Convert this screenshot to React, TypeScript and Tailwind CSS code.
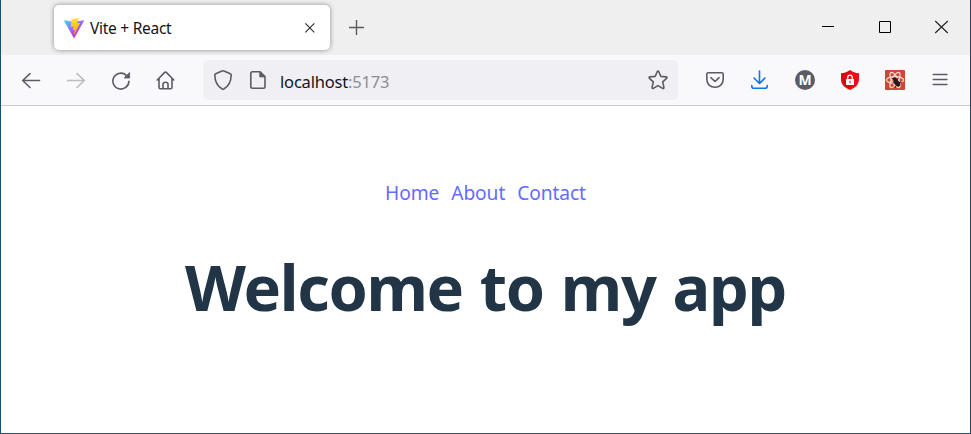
import type { ReactNode } from "react";

function IconButton({ label, children, color = "text-[#5b5b66]" }: { label: string; children: ReactNode; color?: string }) {
  return (
    <button aria-label={label} className={`flex h-10 w-[45px] shrink-0 items-center justify-center ${color}`}>
      <svg width="20" height="20" viewBox="0 0 20 20" fill="none" stroke="currentColor" strokeWidth="1.6" strokeLinecap="round" strokeLinejoin="round">
        {children}
      </svg>
    </button>
  );
}

function ViteLogo() {
  return (
    <svg width="20" height="20" viewBox="0 0 256 257" className="shrink-0">
      <defs>
        <linearGradient id="vite-body" x1="-.8%" x2="57.6%" y1="7.7%" y2="78.4%">
          <stop offset="0%" stopColor="#41D1FF" />
          <stop offset="100%" stopColor="#BD34FE" />
        </linearGradient>
        <linearGradient id="vite-bolt" x1="43.4%" x2="50.3%" y1="2.2%" y2="89%">
          <stop offset="0%" stopColor="#FFEA83" />
          <stop offset="8.3%" stopColor="#FFDD35" />
          <stop offset="100%" stopColor="#FFA800" />
        </linearGradient>
      </defs>
      <path fill="url(#vite-body)" d="M255.153 37.938L134.897 252.976c-2.483 4.44-8.862 4.466-11.382.048L.875 37.958c-2.746-4.814 1.371-10.646 6.827-9.67l120.385 21.517a6.537 6.537 0 0 0 2.322-.004l117.867-21.483c5.438-.991 9.574 4.796 6.877 9.62Z" />
      <path fill="url(#vite-bolt)" d="M185.432.063L96.44 17.501a3.268 3.268 0 0 0-2.634 3.014l-5.474 92.456a3.268 3.268 0 0 0 3.997 3.378l24.777-5.718c2.318-.535 4.413 1.507 3.936 3.838l-7.361 36.047c-.495 2.426 1.782 4.5 4.151 3.78l15.304-4.649c2.372-.72 4.652 1.36 4.15 3.788l-11.698 56.621c-.732 3.542 3.979 5.473 5.943 2.437l1.313-2.028l72.516-144.72c1.215-2.423-.88-5.186-3.54-4.672l-25.505 4.922c-2.396.462-4.435-1.77-3.759-4.114l16.646-57.705c.677-2.35-1.37-4.583-3.769-4.113Z" />
    </svg>
  );
}

function TabStrip() {
  return (
    <div className="flex h-[55px] items-start bg-[#efefef] pl-[53px]">
      <div className="mt-[5px] flex h-[45px] w-[276px] items-center rounded-[5px] bg-white pt-px pr-[14px] pl-[10px] shadow-[0_0_5px_rgba(0,0,0,0.42)]">
        <ViteLogo />
        <span className="ml-[6px] flex-1 pt-[2px] text-[15.5px] tracking-[-0.27px] whitespace-nowrap text-[#15141a]">Vite + React</span>
        <svg width="12" height="12" viewBox="0 0 12 12" fill="none" stroke="#333338" strokeWidth="1.2">
          <path d="M1.4 1.4 10.3 10.3M10.3 1.4 1.4 10.3" />
        </svg>
      </div>
      <svg width="16" height="16" viewBox="0 0 16 16" fill="none" stroke="#5b5b66" strokeWidth="1.4" className="mt-5 ml-[18px]">
        <path d="M1 7.5H16M8.5 0V15" />
      </svg>
      <div className="mt-5 ml-auto flex gap-[42px] pr-[21px]">
        <svg width="14" height="14" viewBox="0 0 14 14" stroke="#000"><path d="M0 6.5H12" /></svg>
        <svg width="14" height="14" viewBox="0 0 14 14" fill="none" stroke="#000"><path d="M1.5 1.5H12.5V12.5H1.5Z" /></svg>
        <svg width="15" height="14" viewBox="0 0 15 14" fill="none" stroke="#222" strokeWidth="1.1"><path d="M1.2 1 13.8 13M13.8 1 1.2 13" /></svg>
      </div>
    </div>
  );
}

function Toolbar() {
  return (
    <div className="flex h-[51px] items-start border-b border-[#cccccf] bg-[#f9f9fb] pt-[5px] pl-[7.5px]">
      <IconButton label="Back"><path d="M1.7 10.5H18.5M9 3.7 1.7 10.5 9 17.5" /></IconButton>
      <IconButton label="Forward" color="text-[#bcbcc1]"><path d="M1.5 10.5H18.3M11 3.7 18.3 10.5 11 17.5" /></IconButton>
      <IconButton label="Reload">
        <path d="M17.9 11.2A8 8 0 1 1 15.4 5.3" />
        <path d="M18.6 2.8V8H13.4Z" fill="currentColor" strokeWidth="0.8" />
      </IconButton>
      <IconButton label="Home">
        <path d="M1.2 10 8.7 2.4Q9.5 1.6 10.3 2.4L17.8 10M3 8.5V17.5Q3 18.8 4.3 18.8H14.7Q16 18.8 16 17.5V8.5M7 18.5V14Q7 12.2 9.5 12.2T12 14V18.5" />
      </IconButton>
      <div className="ml-[14.5px] flex h-10 w-[475px] items-center rounded-[5px] bg-[#f0f0f4] pr-[10px] pl-[10px] text-[#5b5b66]">
        <svg width="20" height="20" viewBox="0 0 20 20" fill="none" stroke="currentColor" strokeWidth="1.6" strokeLinejoin="round">
          <path d="M9 1.1Q10 .5 11 1.1L17.3 3.8Q18.3 4.2 18.2 5.2C18 12 15.6 16.2 10.8 19Q10 19.4 9.2 19C4.4 16.2 2 12 1.8 5.2Q1.7 4.2 2.7 3.8Z" />
        </svg>
        <svg width="18" height="20" viewBox="0 0 18 20" fill="none" stroke="currentColor" strokeWidth="1.6" strokeLinejoin="round" className="ml-4">
          <path d="M3.6 1.7H11L16 6.6V16.6Q16 18.3 14.3 18.3H3.6Q1.8 18.3 1.8 16.6V3.4Q1.8 1.7 3.6 1.7Z" />
          <path d="M10.7 1.5V7H16.2Z" fill="currentColor" strokeWidth="0.7" />
        </svg>
        <span className="ml-[13px] flex-1 pt-[5px] text-[16.5px] tracking-[-0.18px] whitespace-nowrap text-[#15141a]">
          localhost<span className="text-[#8d8d94]">:5173</span>
        </span>
        <svg width="20" height="20" viewBox="0 0 20 20" fill="none" stroke="currentColor" strokeWidth="1.6" strokeLinejoin="round">
          <path d="M9.2 1.7Q10 .4 10.8 1.7L12.8 6.4 18.1 6.9Q19.5 7.2 18.6 8.3L14.7 11.9 15.9 17.4Q16 18.9 14.7 18.4L10 15.6 5.3 18.4Q4 18.9 4.1 17.4L5.3 11.9 1.4 8.3Q.5 7.2 1.9 6.9L7.2 6.4Z" />
        </svg>
      </div>
      <div className="ml-[14.5px] flex">
        <IconButton label="Pocket">
          <path d="M3.3 2.8H16.7Q18.2 2.8 18.2 4.3V9.3C18.2 14.2 14.6 17.3 10 17.3S1.8 14.2 1.8 9.3V4.3Q1.8 2.8 3.3 2.8ZM5.9 7.7 10 11.5 14.1 7.7" />
        </IconButton>
        <IconButton label="Downloads" color="text-[#1373e6]">
          <path d="M9.5 1V13.3M4 8 9.5 13.5 15 8M1.8 15.5V16.3Q1.8 18.3 3.8 18.3H15.2Q17.2 18.3 17.2 16.3V15.5" />
        </IconButton>
        <button aria-label="Account" className="flex h-10 w-[45px] items-center justify-center">
          <span className="flex size-5 items-center justify-center rounded-full bg-[#5b5b66] text-[14px] leading-5 font-bold text-white">M</span>
        </button>
        <IconButton label="Privacy shield">
          <path stroke="none" fill="#d90b12" d="M10 0C7.5 2 4.4 3 1 3.2V9C1 14.3 4.5 17.8 10 20Z" />
          <path stroke="none" fill="#f20a12" d="M10 0C12.5 2 15.6 3 19 3.2V9C19 14.3 15.5 17.8 10 20Z" />
          <rect x="6" y="9" width="8" height="6" rx=".6" stroke="none" fill="#fff" />
          <path stroke="#fff" strokeWidth="1.3" d="M7.7 9V7.4A2.3 2.3 0 0 1 12.3 7.4V9" />
          <path stroke="#d90b12" strokeWidth="1" d="M10 11.2V12.8" />
        </IconButton>
        <IconButton label="React tools">
          <rect width="20" height="20" rx="1" fill="#cf4637" stroke="none" />
          <g stroke="#f7d8d0" strokeWidth="1.25">
            <ellipse cx="10" cy="10" rx="8.5" ry="3.3" />
            <ellipse cx="10" cy="10" rx="8.5" ry="3.3" transform="rotate(60 10 10)" />
            <ellipse cx="10" cy="10" rx="8.5" ry="3.3" transform="rotate(120 10 10)" />
          </g>
          <g stroke="#261b1a" strokeWidth="1">
            <ellipse cx="12" cy="13" rx="2" ry="3.4" transform="rotate(-38 12 13)" fill="#261b1a" />
            <circle cx="9.8" cy="9.2" r="1.3" fill="#261b1a" />
            <path d="M10.5 12.5 8 13M11.5 15 10 17.5M12 10.5 13 8.3M14 12.5 16.4 12.3M8.8 8.2 7.3 8.5" />
          </g>
        </IconButton>
        <IconButton label="Menu"><path strokeWidth="1.4" d="M3.2 4.5H17M3.2 9.5H17M3.2 14.5H17" /></IconButton>
      </div>
    </div>
  );
}

export default function App() {
  return (
    <div className="flex h-[434px] w-[971px] flex-col border-r border-b border-l border-r-[#214568] border-b-[#245576] border-l-[#17516f] bg-white font-['Noto_Sans','Open_Sans',sans-serif]">
      <TabStrip />
      <Toolbar />
      <main className="flex flex-1 flex-col items-center pt-[72px]">
        <nav className="flex gap-[12px] text-[19.2px] leading-[30px] tracking-[-0.1px] text-[#646cff]">
          <a>Home</a>
          <a>About</a>
          <a>Contact</a>
        </nav>
        <h1 className="mt-[44px] text-[63px] leading-[70px] font-bold tracking-[-1.3px] [word-spacing:1.8px] whitespace-nowrap text-[#213547]">Welcome to my app</h1>
      </main>
    </div>
  );
}
